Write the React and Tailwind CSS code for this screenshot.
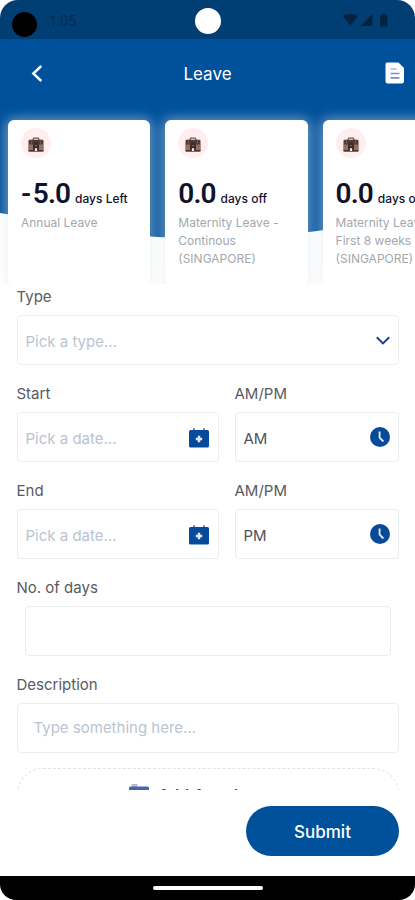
import React from 'react';

const leaves = [
  { days: '-5.0', unit: 'days Left', lines: ['Annual Leave'] },
  { days: '0.0', unit: 'days off', lines: ['Maternity Leave -', 'Continous', '(SINGAPORE)'] },
  { days: '0.0', unit: 'days off', lines: ['Maternity Leave -', 'First 8 weeks', '(SINGAPORE)'] },
];

function Briefcase() {
  return (
    <svg width="16" height="15" viewBox="0 0 16 15">
      <path d="M4.800 3.500L5.600 1.200h4.800l.8 2.300" fill="none" stroke="#6b5a58" strokeWidth="1.200" />
      <rect x="0.500" y="2.800" width="15" height="11.600" rx="1.200" fill="#4f3a34" />
      <rect x="1" y="7.500" width="14" height="6" fill="#94705f" />
      <path d="M3.400 2.800v5M12.600 2.800v5" stroke="#6f5348" strokeWidth="1.200" />
      <path d="M5 13.500V8l1.500-2.500h3L11 8v5.500z" fill="#3d2b2b" />
      <rect x="0.500" y="13.300" width="15" height="1.100" fill="#3d2b2b" />
      <rect x="6.900" y="11.200" width="2.200" height="2.800" fill="#f3e9e8" />
      <path d="M7 8.500h2" stroke="#8a6c5e" />
    </svg>
  );
}

function CalendarIcon() {
  return (
    <svg width="20" height="20" viewBox="0 0 20 20" className="shrink-0 mr-px">
      <path d="M5 0.300v3M15 0.300v3" stroke="#7485b8" strokeWidth="2" />
      <rect x="0" y="2" width="20" height="17.600" rx="1.500" fill="#064a9c" />
      <path d="M10 7.800v6.400M6.800 11h6.400" stroke="#dfe7f8" strokeWidth="2.500" />
    </svg>
  );
}

function ClockIcon() {
  return (
    <svg width="20" height="20" viewBox="0 0 20 20" className="shrink-0 mb-px">
      <circle cx="10" cy="10" r="10" fill="#064a98" />
      <path d="M9.600 4.500v6.200l3.800 3.800" fill="none" stroke="#dfe6f5" strokeWidth="1.900" />
    </svg>
  );
}

function Field({ label, value, placeholder, icon, className = '', boxClass = 'px-2 pt-px' }) {
  return (
    <div className={className}>
      <div className="h-5 mb-2 text-[15px] leading-5 text-[#585a63]">{label}</div>
      <div className={`h-[50px] flex items-center justify-between rounded-[4px] border border-[#e9eef1] bg-white ${boxClass}`}>
        <span className={`${icon ? 'pt-[3px]' : ''} text-[15px] leading-5 ${value ? 'text-[#50525b]' : 'text-[#b9c4d0]'}`}>
          {value || placeholder}
        </span>
        {icon}
      </div>
    </div>
  );
}

export default function App() {
  return (
    <div className="w-[415px] h-[900px] bg-white overflow-hidden font-['Inter',sans-serif]">
      <div className="h-full flex flex-col relative overflow-hidden rounded-t-[18px] rounded-b-[16px] bg-white">
        {/* STATUS BAR */}
        <div className="h-[39px] shrink-0 bg-[#003e73] flex items-start relative pl-3 pr-[27px]">
          <div className="mt-3 w-[25px] h-[25px] rounded-full bg-black" />
          <span className="ml-3 mt-[11px] text-[14px] leading-5 text-[#062c53] font-['Roboto',sans-serif]">1:05</span>
          <div className="absolute left-[195px] top-2 w-[26px] h-[26px] rounded-full bg-white" />
          <svg className="ml-auto mt-[13px]" width="45" height="14" viewBox="0 0 45 14" fill="#06223e">
            <path d="M0 3.600C4-.2 11-.2 15 3.600L7.500 12.600z" />
            <path d="M17.500 13L29.500 1v12z" />
            <path d="M37 2h2V.5h3.500V2h2v11.500H37z" />
          </svg>
        </div>

        {/* HEADER */}
        <div className="h-[245px] shrink-0 relative overflow-hidden">
          <svg className="absolute left-0 top-0" width="415" height="245" viewBox="0 0 415 245">
            <path d="M0 0H415V173C370 183 345 188 317 192C265 199 210 201 158 198C95 194 50 182 0 174z" fill="#00519b" />
          </svg>
          <div className="relative h-[69px] grid grid-cols-3 items-center pl-[31px] pr-[10px]">
            <svg width="12" height="18" viewBox="0 0 12 18" fill="none" stroke="#fff" strokeWidth="2.400">
              <path d="M10.300 1L2.300 8.500l8 7.500" />
            </svg>
            <span className="-ml-[21px] text-center text-[17px] leading-6 text-white">Leave</span>
            <svg className="justify-self-end -mt-[2px]" width="20" height="22" viewBox="0 0 20 22">
              <path d="M2.200.5h11.300L19 6v13.600a1.800 1.800 0 0 1-1.800 1.800H2.200A1.800 1.800 0 0 1 .5 19.600V2.300A1.800 1.800 0 0 1 2.200.5z" fill="#fff" />
              <path d="M5.500 7h6" stroke="#c4c8d4" strokeWidth="2" />
              <path d="M5.500 11.500h9M5.500 15.800h9" stroke="#7b90bf" strokeWidth="1.700" />
            </svg>
          </div>
          <div className="relative flex gap-[15px] pl-2 pt-3">
            {leaves.map((leave, i) => (
              <div key={i} className="w-[142.300px] h-[165px] shrink-0 rounded-[6px] bg-white pl-[13px] pt-2 shadow-[0_1px_12px_3px_rgba(222,234,239,0.46)]">
                <div className="w-[30px] h-[30px] rounded-full bg-[#ffedf0] flex items-center justify-center pt-[3px]">
                  <Briefcase />
                </div>
                <div className="mt-[18px] h-[34px] flex items-baseline gap-[5px] whitespace-nowrap text-[#11112b]">
                  <span className="text-[28px] leading-[36px] font-semibold tracking-[-0.900px] font-['Roboto',sans-serif]">
                    {leave.days.startsWith('-') && <span className="tracking-[1.500px]">-</span>}
                    {leave.days.replace('-', '')}
                  </span>
                  <span className="text-[12px] font-medium">{leave.unit}</span>
                </div>
                <div className="mt-[4px] text-[12px] leading-[18px] text-[#a3a8ae] whitespace-nowrap">
                  {leave.lines.map((line) => (
                    <div key={line}>{line}</div>
                  ))}
                </div>
              </div>
            ))}
          </div>
        </div>

        {/* FORM */}
        <div className="h-[506px] shrink-0 overflow-hidden px-[16.500px] pt-[3px] flex flex-col gap-[19px]">
          <Field
            label="Type"
            placeholder="Pick a type..."
            icon={
              <svg width="14" height="9" viewBox="0 0 14 9" fill="none" stroke="#203b96" strokeWidth="2">
                <path d="M.8 1.200L7 7.400l6.200-6.200" />
              </svg>
            }
          />
          <div className="flex gap-4">
            <Field className="w-[202px]" label="Start" placeholder="Pick a date..." icon={<CalendarIcon />} />
            <Field className="flex-1" label="AM/PM" value="AM" icon={<ClockIcon />} />
          </div>
          <div className="flex gap-4">
            <Field className="w-[202px]" label="End" placeholder="Pick a date..." icon={<CalendarIcon />} />
            <Field className="flex-1" label="AM/PM" value="PM" icon={<ClockIcon />} />
          </div>
          <Field label="No. of days" boxClass="mx-2 px-2" />
          <div className="flex flex-col gap-[15px]">
            <Field label="Description" placeholder="Type something here..." boxClass="px-4" />
            <div className="h-[60px] shrink-0 rounded-[26px] border border-dashed border-[#dfe3e6] flex items-start justify-center gap-[9px] pt-[14px] pr-[3px]">
              <svg width="20" height="18" viewBox="0 0 20 18">
                <path d="M2.500 4V1h6v3z" fill="#b9bdca" />
                <rect x="0" y="3.500" width="20" height="14" rx="1.500" fill="#4a64aa" />
              </svg>
              <span className="mt-[2px] text-[16px] leading-5 font-semibold text-[#2e4778]">Add Attachment</span>
            </div>
          </div>
        </div>

        {/* FOOTER */}
        <div className="h-[86px] shrink-0 px-4 pt-4 flex justify-end items-start">
          <button className="w-[153px] h-[50px] rounded-full bg-[#00519b] text-white text-[17px] font-medium pt-[3px]">
            Submit
          </button>
        </div>
        <div className="h-[24px] shrink-0 bg-black flex items-center justify-center">
          <div className="w-[110px] h-1 rounded-full bg-white" />
        </div>
      </div>
    </div>
  );
}
